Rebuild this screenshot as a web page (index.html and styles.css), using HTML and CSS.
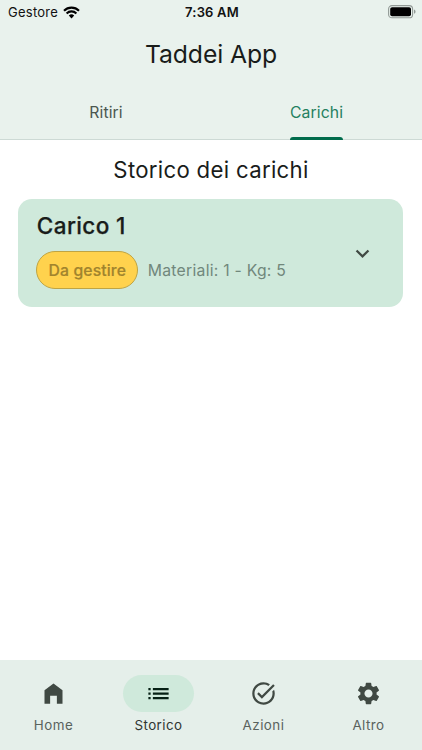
FILE: index.html
```html
<!DOCTYPE html>
<html lang="it">
<head>
<meta charset="utf-8">
<meta name="viewport" content="width=device-width">
<title>Taddei App</title>
<link rel="stylesheet" href="styles.css">
</head>
<body>
<div class="app">
  <header class="top">
    <div class="status">
      <div class="carrier"><span>Gestore</span>
        <svg class="wifi" viewBox="0 0 17 13"><path d="M1 4.7a10.7 10.7 0 0 1 15 0M3.6 7.4a7 7 0 0 1 9.8 0" fill="none" stroke="#000" stroke-width="2.1"/><path d="M5.8 9.6a3.9 3.9 0 0 1 5.4 0L8.5 12.4z"/></svg>
      </div>
      <div class="time">7:36 AM</div>
      <div class="power">
        <svg class="battery" viewBox="0 0 28 14"><rect x=".6" y=".6" width="24" height="12.2" rx="3.4" fill="none" stroke="#929a96" stroke-width="1.1"/><rect x="2.2" y="2.2" width="20.8" height="9" rx="1.9"/><path d="M26 4.6q1.6.6 1.6 2.1T26 8.8z" fill="#929a96"/></svg>
      </div>
    </div>
    <h1 class="title">Taddei App</h1>
    <nav class="tabs">
      <div class="tab"><span>Ritiri</span></div>
      <div class="tab selected"><span>Carichi</span></div>
    </nav>
  </header>
  <main class="content">
    <h2 class="heading">Storico dei carichi</h2>
    <section class="card">
      <div class="info">
        <h3 class="name">Carico 1</h3>
        <div class="row"><span class="chip">Da gestire</span><span class="detail">Materiali: 1 - Kg: 5</span></div>
      </div>
      <svg class="icon chevron" viewBox="0 0 24 24"><path d="M7.41 8.59 12 13.17l4.59-4.58L18 10l-6 6-6-6z"/></svg>
    </section>
  </main>
  <nav class="bottom">
    <div class="item"><div class="pill"><svg class="icon" viewBox="0 0 24 24"><path d="M12 3 4 9v12h5v-7h6v7h5V9z"/></svg></div><span>Home</span></div>
    <div class="item active"><div class="pill"><svg class="icon" viewBox="0 0 24 24"><path d="M3 13h2v-2H3zm0 4h2v-2H3zm0-8h2V7H3zm4 4h14v-2H7zm0 4h14v-2H7zM7 7v2h14V7z"/></svg></div><span>Storico</span></div>
    <div class="item"><div class="pill"><svg class="icon" viewBox="0 0 24 24"><path d="M22 5.18 10.59 16.6l-4.24-4.24 1.41-1.41 2.83 2.83 10-10zM19.79 10.22c.13.57.21 1.17.21 1.78 0 4.42-3.58 8-8 8s-8-3.58-8-8 3.58-8 8-8c1.58 0 3.04.46 4.28 1.25l1.44-1.44C16.1 2.67 14.13 2 12 2 6.48 2 2 6.48 2 12s4.48 10 10 10 10-4.48 10-10c0-1.19-.22-2.33-.6-3.39z"/></svg></div><span>Azioni</span></div>
    <div class="item"><div class="pill"><svg class="icon" viewBox="0 0 24 24"><path d="M19.14 12.94c.04-.3.06-.61.06-.94 0-.32-.02-.64-.07-.94l2.03-1.58c.18-.14.23-.41.12-.61l-1.92-3.32c-.12-.22-.37-.29-.59-.22l-2.39.96c-.5-.38-1.03-.7-1.62-.94l-.36-2.54c-.04-.24-.24-.41-.48-.41h-3.84c-.24 0-.43.17-.47.41l-.36 2.54c-.59.24-1.13.57-1.62.94l-2.39-.96c-.22-.08-.47 0-.59.22L2.74 8.87c-.12.21-.08.47.12.61l2.03 1.58c-.05.3-.09.63-.09.94s.02.64.07.94l-2.03 1.58c-.18.14-.23.41-.12.61l1.92 3.32c.12.22.37.29.59.22l2.39-.96c.5.38 1.03.7 1.62.94l.36 2.54c.05.24.24.41.48.41h3.84c.24 0 .44-.17.47-.41l.36-2.54c.59-.24 1.13-.56 1.62-.94l2.39.96c.22.08.47 0 .59-.22l1.92-3.32c.12-.22.07-.47-.12-.61zM12 15.6c-1.98 0-3.6-1.62-3.6-3.6s1.62-3.6 3.6-3.6 3.6 1.62 3.6 3.6-1.62 3.6-3.6 3.6z"/></svg></div><span>Altro</span></div>
  </nav>
</div>
</body>
</html>
```
FILE: styles.css
```css
* { box-sizing: border-box; }
body { margin: 0; font-family: Inter, "Liberation Sans", sans-serif; background: #fff; color: #191c1a; }
h1, h2, h3 { margin: 0; font-weight: 400; }
svg { display: block; }
.app { width: 422px; height: 750px; display: flex; flex-direction: column; overflow: hidden; }
.top { height: 140px; background: #e9f2ed linear-gradient(#cddad5, #cddad5) bottom / 100% 1px no-repeat; display: flex; flex-direction: column; }
.status { height: 24px; display: grid; grid-template-columns: 1fr auto 1fr; align-items: center; padding: 0 6px 0 8px; color: #111; font-size: 13px; line-height: 24px; }
.carrier { display: flex; align-items: center; gap: 5px; letter-spacing: .25px; }
.wifi { width: 17px; height: 13px; }
.time { font-weight: 600; letter-spacing: .2px; }
.power { display: flex; justify-content: flex-end; }
.battery { width: 28px; height: 14px; margin-top: -1px; }
.title { height: 62px; line-height: 61px; text-align: center; font-size: 24.75px; letter-spacing: -.12px; }
.tabs { flex: 1; display: grid; grid-template-columns: 1fr 1fr; }
.tab { display: flex; justify-content: center; line-height: 53px; font-size: 15.75px; letter-spacing: .1px; color: #4b5750; padding-left: 1px; }
.tab span { height: 54px; }
.selected { padding-left: 0; }
.selected span { color: #24805f; display: flex; flex-direction: column; }
.selected span::after { content: ""; height: 3.5px; margin-top: -2.5px; border-radius: 3px 3px 0 0; background: #006c4c; }
.content { flex: 1; }
.heading { height: 59px; line-height: 60px; text-align: center; font-size: 22.2px; letter-spacing: .3px; }
.card { margin: 0 18.6px 0 18.3px; height: 108px; border-radius: 14px; background: #cfe9db; padding: 11px 27px 0 18px; display: flex; justify-content: space-between; }
.name { height: 32px; line-height: 32px; font-size: 22.5px; font-weight: 500; letter-spacing: .4px; padding-left: .5px; -webkit-text-stroke: .25px; }
.row { display: flex; align-items: center; margin-top: 9px; gap: 9.5px; }
.chip { width: 102px; height: 38px; line-height: 37px; text-align: center; border: 1px solid #bfa443; border-radius: 19px; background: #ffd24d; color: #a1842d; font-size: 15.75px; font-weight: 500; letter-spacing: .1px; -webkit-text-stroke: .2px; }
.detail { font-size: 15.75px; letter-spacing: .25px; color: #71877c; }
.icon { width: 27px; height: 27px; fill: #404943; }
.chevron { margin-top: 30px; }
.bottom { height: 90px; padding: 15px 1px 0; background: #e5efea; display: grid; grid-template-columns: repeat(4, 1fr); }
.item { display: flex; flex-direction: column; align-items: center; font-size: 13.4px; line-height: 20px; letter-spacing: .45px; color: #59625d; }
.pill { width: 71.5px; height: 36.5px; border-radius: 19px; display: flex; align-items: center; justify-content: center; margin-bottom: 3px; }
.active { color: #303633; }
.active .pill { background: #cfe9db; }
.active .icon { fill: #062015; }
```
